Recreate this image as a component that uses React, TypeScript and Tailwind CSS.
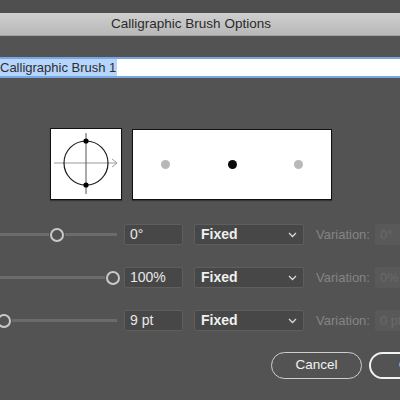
import React from 'react';

const font = { fontFamily: '"Liberation Sans", "DejaVu Sans", Arial, sans-serif' };

function Slider({ at }: { at: number }) {
  // at = thumb centre in px from the left edge of the 117px track
  return (
    <div className="flex items-center w-[117px] h-[20px] shrink-0">
      <div className="h-[3px] bg-[#6b6b6b] shrink-0" style={{ width: Math.max(at - 8, 0) }} />
      <div className="w-[14px] h-[14px] shrink-0 mx-[1px] rounded-full border-2 border-[#c9c9c9] bg-[#535353]" style={{ marginLeft: at < 8 ? at - 8 : 1 }} />
      <div className="h-[3px] flex-1 bg-[#6b6b6b]" />
    </div>
  );
}

function Row({ at, value, dim }: { at: number; value: string; dim: string }) {
  return (
    <div className="flex items-center h-[21px] w-max">
      <Slider at={at} />
      <div className="ml-[7px] w-[59px] h-[21px] shrink-0 rounded-[2px] border border-[#5e5e5e] bg-[#474747] text-[#e8e8e8] text-[14px] leading-[19px] pl-[5px]">
        {value}
      </div>
      <div className="ml-[11px] w-[110px] h-[21px] shrink-0 rounded-[2px] border border-[#5e5e5e] bg-[#474747] flex items-center pl-[6px] pr-[6px]">
        <span className="text-[#f0f0f0] text-[14px] font-bold flex-1">Fixed</span>
        <svg width="9" height="6" viewBox="0 0 9 6">
          <path d="M1 1 L4.5 4.5 L8 1" fill="none" stroke="#d8d8d8" strokeWidth="1.3" />
        </svg>
      </div>
      <span className="ml-[12px] shrink-0 text-[13px] text-[#858585]">Variation:</span>
      <div className="ml-[5px] w-[40px] h-[21px] shrink-0 rounded-[2px] bg-[#595959] text-[#6a6a6a] text-[13px] leading-[21px] pl-[5px] whitespace-nowrap">
        {dim}
      </div>
    </div>
  );
}

export default function App() {
  return (
    <div className="w-[400px] h-[400px] overflow-hidden bg-[#535353] flex flex-col" style={font}>
      <div className="h-[13px] bg-[#4f4f4f] shrink-0" />
      {/* 타이틀 바 */}
      <div className="h-[23px] shrink-0 bg-gradient-to-b from-[#cfcfcf] to-[#b8b8b8] border-b border-[#a2a2a2] flex items-center justify-center pr-[18px]">
        <span className="text-[13.5px] text-[#2a2a2a]">Calligraphic Brush Options</span>
      </div>

      {/* 이름 입력 */}
      <div className="mt-[21px] ml-[-4px] w-[410px] h-[21px] shrink-0 bg-white border-y-2 border-[#79a8e0] flex items-center pl-[4px]">
        <span className="bg-[#b5d5fc] text-[#2e2e2e] text-[13px] leading-[17px] pr-[1px]">Calligraphic Brush 1</span>
      </div>

      {/* 미리보기 */}
      <div className="mt-[50px] flex items-start shrink-0">
        <div className="ml-[50px] w-[72px] h-[72px] shrink-0 bg-white border-[1.5px] border-[#111] shadow-[0_1px_1px_rgba(0,0,0,0.35)]">
          <svg width="69" height="69" viewBox="0 0 69 69">
            <line x1="3" y1="34" x2="66" y2="34" stroke="#9a9a9a" strokeWidth="1" />
            <path d="M61 30 L66 34 L61 38" fill="none" stroke="#9a9a9a" strokeWidth="1" />
            <line x1="35" y1="4" x2="35" y2="65" stroke="#555" strokeWidth="1" />
            <circle cx="35" cy="34" r="22" fill="none" stroke="#1a1a1a" strokeWidth="1.2" />
            <circle cx="35" cy="12" r="2.6" fill="#000" />
            <circle cx="35" cy="56" r="2.6" fill="#000" />
          </svg>
        </div>
        <div className="ml-[10px] mt-[1px] w-[200px] h-[71px] shrink-0 bg-white border-[1.5px] border-[#111] shadow-[0_1px_1px_rgba(0,0,0,0.35)] flex items-center">
          <div className="ml-[28px] w-[9px] h-[9px] shrink-0 rounded-full bg-[#b8b8b8]" />
          <div className="ml-[58px] w-[9px] h-[9px] shrink-0 rounded-full bg-[#0a0a0a]" />
          <div className="ml-[57px] w-[9px] h-[9px] shrink-0 rounded-full bg-[#b8b8b8]" />
        </div>
      </div>

      {/* 옵션 행 */}
      <div className="mt-[24px] flex flex-col gap-[22px] shrink-0">
        <Row at={57} value="0°" dim="0°" />
        <Row at={113} value="100%" dim="0%" />
        <Row at={5} value="9 pt" dim="0 pt" />
      </div>

      {/* 버튼 */}
      <div className="mt-[21px] flex shrink-0 w-max">
        <button className="ml-[271px] w-[91px] h-[27px] shrink-0 rounded-full border border-[#cfcfcf] text-[#f2f2f2] text-[13.5px]">
          Cancel
        </button>
        <button className="ml-[7px] w-[80px] h-[27px] shrink-0 rounded-full border-2 border-[#f2f2f2] text-[#f2f2f2] text-[13.5px] font-bold">
          OK
        </button>
      </div>
    </div>
  );
}
